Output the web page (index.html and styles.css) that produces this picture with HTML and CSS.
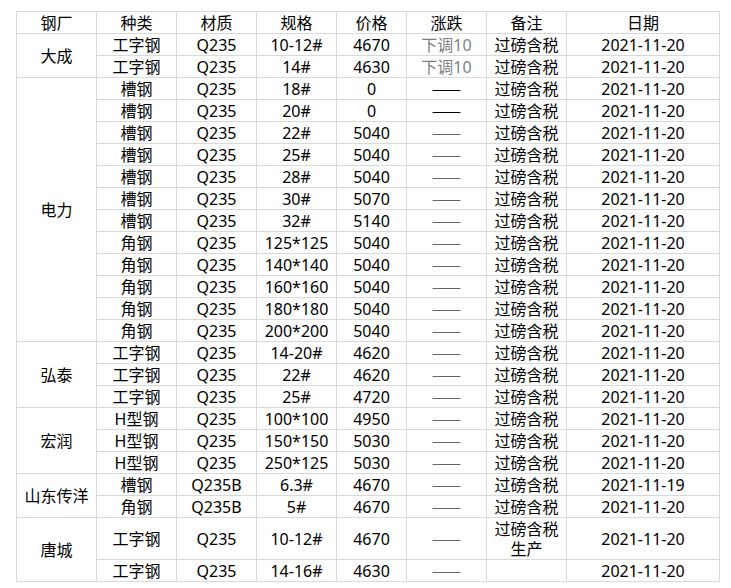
FILE: index.html
```html
<!DOCTYPE html>
<html lang="zh">
<head>
<meta charset="utf-8">
<link rel="stylesheet" href="styles.css">
</head>
<body>
<table class="price">
<colgroup>
<col class="c80"><col class="c80"><col class="c80"><col class="c80"><col class="c70"><col class="c80"><col class="c80"><col class="c153">
</colgroup>
<tbody>
<tr><td>钢厂</td><td>种类</td><td>材质</td><td>规格</td><td>价格</td><td>涨跌</td><td>备注</td><td>日期</td></tr>
<tr><td rowspan="2">大成</td><td>工字钢</td><td>Q235</td><td>10-12#</td><td>4670</td><td class="down">下调10</td><td>过磅含税</td><td>2021-11-20</td></tr>
<tr><td>工字钢</td><td>Q235</td><td>14#</td><td>4630</td><td class="down">下调10</td><td>过磅含税</td><td>2021-11-20</td></tr>
<tr><td rowspan="12">电力</td><td>槽钢</td><td>Q235</td><td>18#</td><td>0</td><td class="dash dark"><span>——</span></td><td>过磅含税</td><td>2021-11-20</td></tr>
<tr><td>槽钢</td><td>Q235</td><td>20#</td><td>0</td><td class="dash dark"><span>——</span></td><td>过磅含税</td><td>2021-11-20</td></tr>
<tr><td>槽钢</td><td>Q235</td><td>22#</td><td>5040</td><td class="dash"><span>——</span></td><td>过磅含税</td><td>2021-11-20</td></tr>
<tr><td>槽钢</td><td>Q235</td><td>25#</td><td>5040</td><td class="dash"><span>——</span></td><td>过磅含税</td><td>2021-11-20</td></tr>
<tr><td>槽钢</td><td>Q235</td><td>28#</td><td>5040</td><td class="dash"><span>——</span></td><td>过磅含税</td><td>2021-11-20</td></tr>
<tr><td>槽钢</td><td>Q235</td><td>30#</td><td>5070</td><td class="dash"><span>——</span></td><td>过磅含税</td><td>2021-11-20</td></tr>
<tr><td>槽钢</td><td>Q235</td><td>32#</td><td>5140</td><td class="dash"><span>——</span></td><td>过磅含税</td><td>2021-11-20</td></tr>
<tr><td>角钢</td><td>Q235</td><td>125*125</td><td>5040</td><td class="dash"><span>——</span></td><td>过磅含税</td><td>2021-11-20</td></tr>
<tr><td>角钢</td><td>Q235</td><td>140*140</td><td>5040</td><td class="dash"><span>——</span></td><td>过磅含税</td><td>2021-11-20</td></tr>
<tr><td>角钢</td><td>Q235</td><td>160*160</td><td>5040</td><td class="dash"><span>——</span></td><td>过磅含税</td><td>2021-11-20</td></tr>
<tr><td>角钢</td><td>Q235</td><td>180*180</td><td>5040</td><td class="dash"><span>——</span></td><td>过磅含税</td><td>2021-11-20</td></tr>
<tr><td>角钢</td><td>Q235</td><td>200*200</td><td>5040</td><td class="dash"><span>——</span></td><td>过磅含税</td><td>2021-11-20</td></tr>
<tr><td rowspan="3">弘泰</td><td>工字钢</td><td>Q235</td><td>14-20#</td><td>4620</td><td class="dash"><span>——</span></td><td>过磅含税</td><td>2021-11-20</td></tr>
<tr><td>工字钢</td><td>Q235</td><td>22#</td><td>4620</td><td class="dash"><span>——</span></td><td>过磅含税</td><td>2021-11-20</td></tr>
<tr><td>工字钢</td><td>Q235</td><td>25#</td><td>4720</td><td class="dash"><span>——</span></td><td>过磅含税</td><td>2021-11-20</td></tr>
<tr><td rowspan="3">宏润</td><td>H型钢</td><td>Q235</td><td>100*100</td><td>4950</td><td class="dash"><span>——</span></td><td>过磅含税</td><td>2021-11-20</td></tr>
<tr><td>H型钢</td><td>Q235</td><td>150*150</td><td>5030</td><td class="dash"><span>——</span></td><td>过磅含税</td><td>2021-11-20</td></tr>
<tr><td>H型钢</td><td>Q235</td><td>250*125</td><td>5030</td><td class="dash"><span>——</span></td><td>过磅含税</td><td>2021-11-20</td></tr>
<tr><td rowspan="2">山东传洋</td><td>槽钢</td><td>Q235B</td><td>6.3#</td><td>4670</td><td class="dash"><span>——</span></td><td>过磅含税</td><td>2021-11-19</td></tr>
<tr><td>角钢</td><td>Q235B</td><td>5#</td><td>4670</td><td class="dash"><span>——</span></td><td>过磅含税</td><td>2021-11-20</td></tr>
<tr><td rowspan="2">唐城</td><td>工字钢</td><td>Q235</td><td>10-12#</td><td>4670</td><td class="dash"><span>——</span></td><td>过磅含税<br>生产</td><td>2021-11-20</td></tr>
<tr><td>工字钢</td><td>Q235</td><td>14-16#</td><td>4630</td><td class="dash"><span>——</span></td><td></td><td>2021-11-20</td></tr>
</tbody>
</table>
</body>
</html>
```
FILE: styles.css
```css
html, body {
  margin: 0;
  padding: 0;
  background: #ffffff;
}
body {
  padding: 11px 0 0 16px;
  font-family: "Noto Sans", "Noto Sans CJK SC", sans-serif;
  font-size: 16px;
  color: #000;
}
.price {
  border-collapse: collapse;
  table-layout: fixed;
  width: 704px;
}
.c80 { width: 80px; }
.c70 { width: 70px; }
.c153 { width: 153px; }
.price td {
  border: 1px solid #d9d9d9;
  padding: 1px 0 0 0;
  line-height: 20px;
  height: 20px;
  text-align: center;
  vertical-align: middle;
  white-space: nowrap;
  overflow: hidden;
}
.price td.down {
  color: #7f7f7f;
}
.price td.dash {
  color: #666666;
}
.price td.dash span {
  display: inline-block;
  vertical-align: top;
  height: 20px;
  font-family: "Noto Sans CJK SC", sans-serif;
  font-size: 15px;
  line-height: 20px;
  transform: scaleX(1.17);
}
.price td.dark {
  color: #000;
}
```
